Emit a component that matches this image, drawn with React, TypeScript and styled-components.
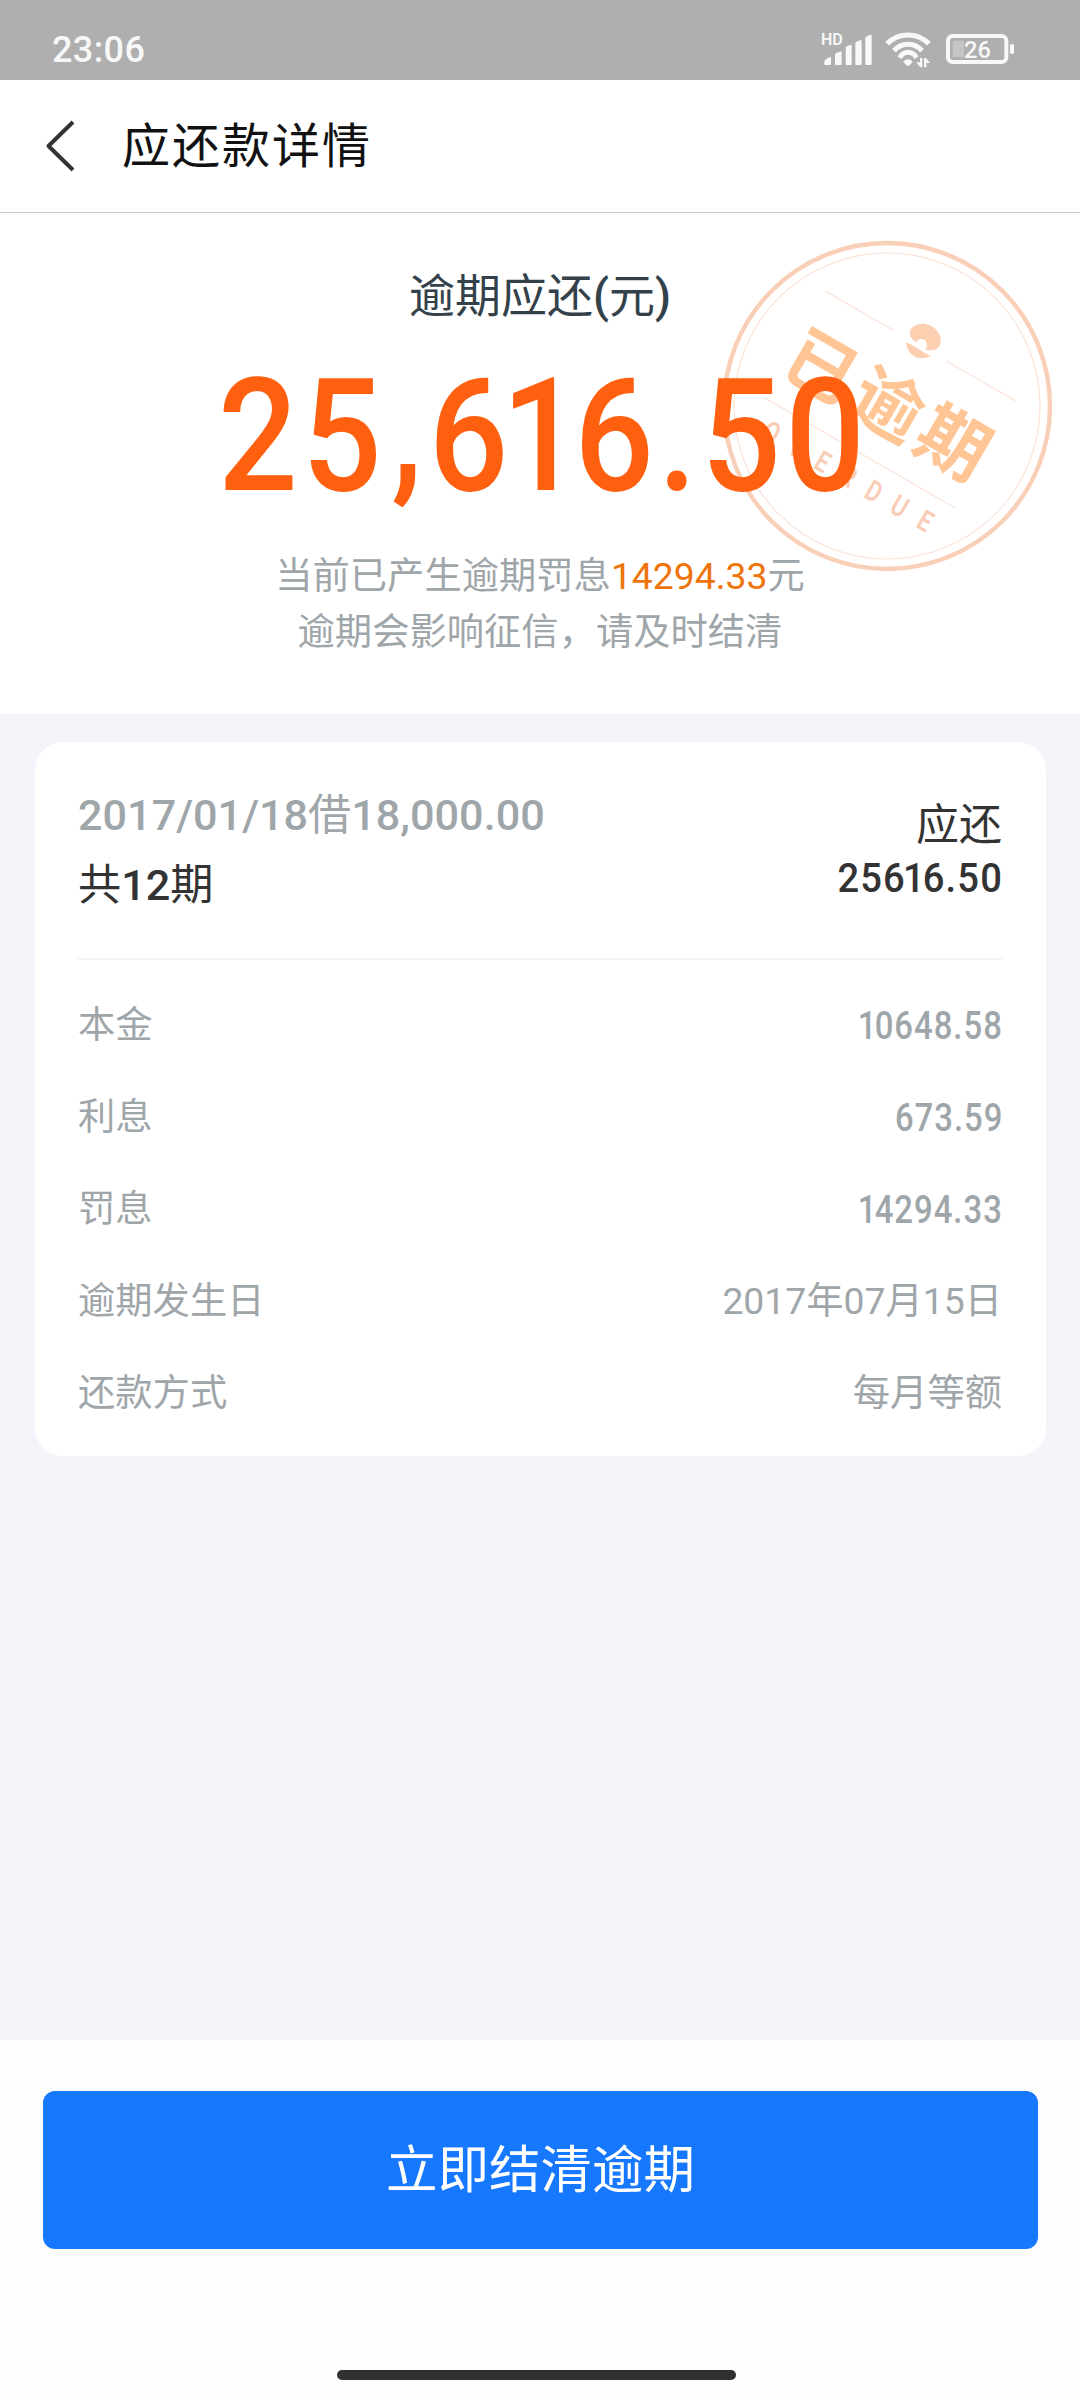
import * as React from 'react';
import styled, { createGlobalStyle } from 'styled-components';

const GlobalStyle = createGlobalStyle`
    * {
        box-sizing: border-box;
    }
    body {
        margin: 0;
        background-color: #f4f4fa;
        font-family: Roboto, 'Noto Sans CJK SC', sans-serif;
    }
`;

const Page = styled.div`
    display: flex;
    flex-direction: column;
    width: 1080px;
    height: 2400px;
    overflow: hidden;
    background-color: #f4f4fa;
`;

const StatusBar = styled.div`
    display: flex;
    justify-content: space-between;
    flex: none;
    height: 80px;
    padding: 0 63px 0 52px;
    background-color: #afafaf;
    color: #f8f8f8;
`;
const Clock = styled.span`
    padding-top: 20px;
    font-size: 36px;
    font-weight: 500;
    line-height: 60px;
    letter-spacing: 0.4px;
`;
const StatusIcons = styled.svg`
    display: block;
    width: 197px;
    height: 80px;
`;

const NavBar = styled.header`
    display: flex;
    align-items: center;
    flex: none;
    height: 133px;
    padding-left: 44px;
    border-bottom: 1px solid #c8c8c8;
    background-color: #fff;
`;
const BackIcon = styled.svg`
    display: block;
    width: 32px;
    height: 52px;
`;
const NavTitle = styled.h1`
    margin: 1px 0 0 46px;
    color: #111;
    font-size: 48px;
    font-weight: 400;
    letter-spacing: 2px;
    line-height: 72px;
`;

const Summary = styled.section`
    position: relative;
    display: flex;
    flex-direction: column;
    align-items: center;
    flex: none;
    height: 501px;
    padding-top: 50px;
    background-color: #fff;
`;
const Stamp = styled.svg`
    position: absolute;
    top: 23px;
    left: 717px;
    width: 340px;
    height: 340px;
`;
const SummaryLabel = styled.div`
    color: #33414b;
    font-size: 46px;
    line-height: 66px;
`;
const Medium = styled.span`
    font-weight: 500;
`;
const Amount = styled.div`
    position: relative;
    height: 186px;
    margin-top: 14px;
    margin-left: 8px;
    color: #ff6010;
    font-size: 158px;
    font-weight: 500;
    letter-spacing: 0.03em;
    line-height: 186px;
    white-space: nowrap;
    transform: scaleX(0.888);
`;
const Comma = styled.span`
    margin: 0 2px 0 6px;
    line-height: 0;
    vertical-align: 8px;
`;
const TightPair = styled.span`
    letter-spacing: -0.05em;
`;
const HintBlock = styled.div`
    margin-top: 19px;
    text-align: center;
`;
const Hint = styled.p`
    margin: 0;
    color: #9fa6aa;
    font-size: 37.3px;
    line-height: 56px;
`;
const Penalty = styled.span`
    color: #f0740c;
`;

const Card = styled.section`
    flex: none;
    height: 714px;
    margin: 28px 34px 0 35px;
    padding: 0 44px 0 43px;
    border-radius: 28px;
    background-color: #fff;
`;
const CardHead = styled.div`
    display: flex;
    justify-content: space-between;
    height: 218px;
    border-bottom: 2px solid #f4f4f6;
`;
const LoanInfo = styled.div`
    padding-top: 39px;
    font-size: 43.2px;
    line-height: 70px;
`;
const LoanTitle = styled.div`
    color: #9fa6aa;
`;
const LoanTerms = styled.div`
    color: #333;
`;
const DueInfo = styled.div`
    display: flex;
    flex-direction: column;
    align-items: flex-end;
    padding-top: 52px;
    color: #333;
    font-size: 43px;
    line-height: 62px;
`;
const Figure = styled.span<{ size: number; stretch: number }>`
    margin-right: -1px;
    font-size: ${props => props.size}px;
    font-weight: 500;
    letter-spacing: 0.03em;
    line-height: 44px;
    transform: scaleX(${props => props.stretch});
    transform-origin: right center;
`;

const DetailList = styled.dl`
    margin: 0;
    padding-top: 16px;
`;
const DetailRow = styled.div`
    display: flex;
    align-items: center;
    justify-content: space-between;
    height: 92px;
    color: #9fa6aa;
    font-size: 37.3px;
`;
const DetailLabel = styled.dt`
    margin: 0;
`;
const DetailValue = styled.dd<{ low?: boolean }>`
    display: flex;
    margin: 0;
    padding-top: ${props => (props.low ? '7px' : '0')};
`;

const Footer = styled.footer`
    display: flex;
    flex-direction: column;
    align-items: center;
    height: 360px;
    margin-top: auto;
    padding: 51px 42px 0 43px;
    background-color: #fdfdfd;
`;
const PayButton = styled.button`
    width: 100%;
    height: 158px;
    padding: 0 0 10px;
    border: 0;
    border-radius: 12px;
    background-color: #1677ff;
    color: #fff;
    font-family: inherit;
    font-size: 51.5px;
    cursor: pointer;
`;
const HomeIndicator = styled.div`
    width: 399px;
    height: 10px;
    margin-top: auto;
    margin-right: 9px;
    margin-bottom: 20px;
    border-radius: 5px;
    background-color: #303030;
`;

interface IDetail {
    label: string;
    value: string;
    isFigure?: boolean;
}

const details: IDetail[] = [
    { label: '本金', value: '10648.58', isFigure: true },
    { label: '利息', value: '673.59', isFigure: true },
    { label: '罚息', value: '14294.33', isFigure: true },
    { label: '逾期发生日', value: '2017年07月15日' },
    { label: '还款方式', value: '每月等额' },
];

const stampLetters = 'OVERDUE'.split('');

// a 1 sits closer to the digits on both sides of it
const Digits = ({ value }: { value: string }) => (
    <>
        {value.split(/(\d?1|,)/).map((part, i) => {
            if (part === ',') {
                return <Comma key={i}>,</Comma>;
            }
            return part.endsWith('1') ? <TightPair key={i}>{part}</TightPair> : part;
        })}
    </>
);

const SignalIcons = () => (
    <StatusIcons viewBox="120 0 591 240" fill="#f8f8f8" fontFamily="Roboto">
        <text x="123" y="135" fontSize="48" fontWeight="600">HD</text>
        <path d="M133 192v-9q7-10 20-12v21q0 3-3 3h-14q-3 0-3-3zM165 192v-29q6-7 20-9v38q0 3-3 3h-14q-3 0-3-3zM197 192v-50q4-6 18-8v58q0 3-3 3h-12q-3 0-3-3zM226 192v-64q5-6 19-8v72q0 3-3 3h-13q-3 0-3-3zM256 192v-79q5-7 19-9v88q0 3-3 3h-13q-3 0-3-3z" />
        {/* wifi */}
        <path d="M321 131Q348 105 384 105T447 131M342 152Q360 133 384 133T426 152M359 173Q368 157 384 157T410 173" fill="none" stroke="#f8f8f8" strokeWidth="15" />
        <path d="M370 184q14-12 28 0q-3 7-9 12q-5 3-10 0q-6-5-9-12z" />
        <path d="M420 174h7v28h-6l-12-15h11zM432 202v-28h6l12 15h-11v13z" />
        {/* battery */}
        <rect x="504" y="108" width="175" height="78" rx="14" fill="none" stroke="#f8f8f8" strokeWidth="12" />
        <rect x="690" y="132" width="12" height="30" rx="5" />
        <rect x="518" y="122" width="34" height="50" rx="4" fill="#c4c4c4" />
        <text x="552" y="174" fontSize="71" fontWeight="500">26</text>
    </StatusIcons>
);

const OverdueStamp = () => (
    <Stamp viewBox="-170 -170 340 340">
        <circle r="163" fill="none" stroke="#f9cfb8" strokeWidth="4.4" />
        <circle r="153" fill="none" stroke="#fbe3d8" strokeWidth="1.2" />
        <g transform="translate(3 -96.5) scale(0.3333)" fill="#fbcfb0">
            <path d="M68 90C50 68 64 44 98 43C128 43 156 70 152 98C150 120 128 127 106 120C114 110 112 92 98 89C88 87 80 92 79 99Z" />
            <path d="M48 98C70 106 95 127 122 139C105 151 75 148 62 132C53 122 50 110 48 98Z" />
        </g>
        <g transform="rotate(30)">
            <path d="M-111-68.700H-32M29-68.700H109M-111 54.300H110" stroke="#fbe3d8" strokeWidth="1.2" />
            <text x="2.5" y="24.500" textAnchor="middle" fill="#ffc594" fontFamily="'Noto Sans CJK SC'" fontSize="71" fontWeight="700" letterSpacing="5">
                已逾期
            </text>
            {stampLetters.map((letter, i) => (
                <text key={i} transform={`translate(${-87 + i * 29.6} 90.500) scale(0.78 1)`} textAnchor="middle" fill="#f9cdb5" fontFamily="Roboto" fontSize="29" fontWeight="600">
                    {letter}
                </text>
            ))}
        </g>
    </Stamp>
);

const App = () => (
    <>
        <GlobalStyle />
        <Page>
            <StatusBar>
                <Clock>23:06</Clock>
                <SignalIcons />
            </StatusBar>
            <NavBar>
                <BackIcon viewBox="0 0 32 52" fill="none" stroke="#333" strokeWidth="4">
                    <path d="M29 2L4.500 26L29 50" strokeLinejoin="round" />
                </BackIcon>
                <NavTitle>应还款详情</NavTitle>
            </NavBar>
            <Summary>
                <OverdueStamp />
                <SummaryLabel>
                    逾期应还<Medium>(</Medium>元<Medium>)</Medium>
                </SummaryLabel>
                <Amount>
                    <Digits value="25,616.50" />
                </Amount>
                <HintBlock>
                    <Hint>
                        当前已产生逾期罚息<Penalty>14294.33</Penalty>元
                    </Hint>
                    <Hint>逾期会影响征信，请及时结清</Hint>
                </HintBlock>
            </Summary>
            <Card>
                <CardHead>
                    <LoanInfo>
                        <LoanTitle>
                            <Medium>2017/01/18</Medium>借<Medium>18,000.00</Medium>
                        </LoanTitle>
                        <LoanTerms>
                            共<Medium>12</Medium>期
                        </LoanTerms>
                    </LoanInfo>
                    <DueInfo>
                        <span>应还</span>
                        <Figure size={41.5} stretch={0.92}>
                            <Digits value="25616.50" />
                        </Figure>
                    </DueInfo>
                </CardHead>
                <DetailList>
                    {details.map(({ label, value, isFigure }) => (
                        <DetailRow key={label}>
                            <DetailLabel>{label}</DetailLabel>
                            <DetailValue low={isFigure}>
                                {isFigure ? (
                                    <Figure size={38} stretch={0.865}>
                                        <Digits value={value} />
                                    </Figure>
                                ) : (
                                    value
                                )}
                            </DetailValue>
                        </DetailRow>
                    ))}
                </DetailList>
            </Card>
            <Footer>
                <PayButton type="button">立即结清逾期</PayButton>
                <HomeIndicator />
            </Footer>
        </Page>
    </>
);

export default App;
